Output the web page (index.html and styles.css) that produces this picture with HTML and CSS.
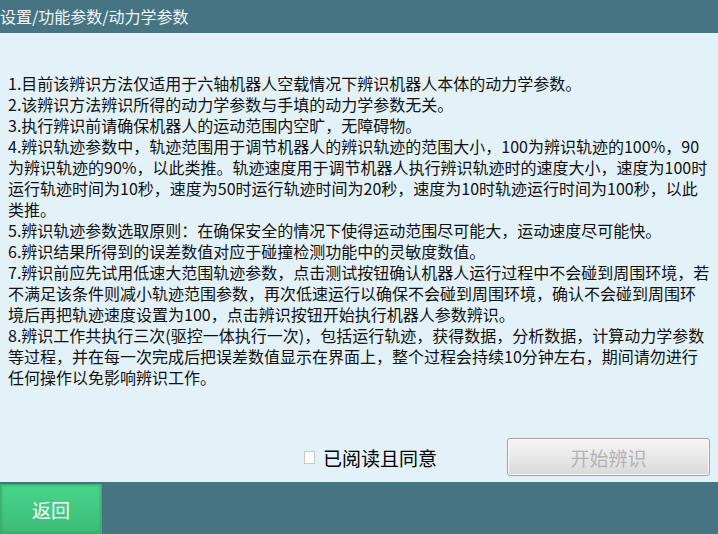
FILE: index.html
```html
<!DOCTYPE html>
<html>
<head>
    <meta charset="utf-8">
    <title>动力学参数</title>
    <link rel="stylesheet" href="styles.css">
</head>
<body>
    <div class="page">
        <div class="title-bar">设置/功能参数/动力学参数</div>

        <div class="main">
            <div class="notes">
                <p>1.目前该辨识方法仅适用于六轴机器人空载情况下辨识机器人本体的动力学参数。</p>
                <p>2.该辨识方法辨识所得的动力学参数与手填的动力学参数无关。</p>
                <p>3.执行辨识前请确保机器人的运动范围内空旷，无障碍物。</p>
                <p>4.辨识轨迹参数中，轨迹范围用于调节机器人的辨识轨迹的范围大小，100为辨识轨迹的100%，90<br>为辨识轨迹的90%，以此类推。轨迹速度用于调节机器人执行辨识轨迹时的速度大小，速度为100时<br>运行轨迹时间为10秒，速度为50时运行轨迹时间为20秒，速度为10时轨迹运行时间为100秒，以此<br>类推。</p>
                <p>5.辨识轨迹参数选取原则：在确保安全的情况下使得运动范围尽可能大，运动速度尽可能快。</p>
                <p>6.辨识结果所得到的误差数值对应于碰撞检测功能中的灵敏度数值。</p>
                <p>7.辨识前应先试用低速大范围轨迹参数，点击测试按钮确认机器人运行过程中不会碰到周围环境，若<br>不满足该条件则减小轨迹范围参数，再次低速运行以确保不会碰到周围环境，确认不会碰到周围环<br>境后再把轨迹速度设置为100，点击辨识按钮开始执行机器人参数辨识。</p>
                <p>8.辨识工作共执行三次(驱控一体执行一次)，包括运行轨迹，获得数据，分析数据，计算动力学参数<br>等过程，并在每一次完成后把误差数值显示在界面上，整个过程会持续10分钟左右，期间请勿进行<br>任何操作以免影响辨识工作。</p>
            </div>

            <div class="actions">
                <label class="agree">
                    <input type="checkbox" id="agree">
                    <span>已阅读且同意</span>
                </label>
                <button class="start-btn" id="start" disabled>开始辨识</button>
            </div>
        </div>

        <div class="bottom-bar">
            <button class="back-btn">返回</button>
        </div>
    </div>

    <script>
        // 勾选同意后才能开始辨识
        const agree = document.getElementById('agree');
        const start = document.getElementById('start');
        agree.addEventListener('change', function () {
            start.disabled = !agree.checked;
        });
    </script>
</body>
</html>
```

FILE: styles.css
```css
body {
    margin: 0;
    padding: 0;
    font-family: "Noto Sans CJK SC", "Noto Sans", sans-serif;
    background: #e3f2f8;
}

.page {
    height: 534px;
    display: flex;
    flex-direction: column;
}

.title-bar {
    height: 33px;
    line-height: 33px;
    background: #467482;
    color: #f2f6f7;
    font-size: 16px;
}

.main {
    flex: 1;
    display: flex;
    flex-direction: column;
    padding: 40px 8px 6px 8px;
}

.notes {
    width: 706px;
    color: #111;
    font-size: 16px;
    line-height: 21px;
    white-space: nowrap;
}

.notes p {
    margin: 0;
}

.actions {
    margin-top: auto;
    display: flex;
    justify-content: flex-end;
    align-items: center;
}

.agree {
    display: flex;
    align-items: center;
    font-size: 19px;
    color: #000;
    margin-right: 70px;
}

.agree input {
    appearance: none;
    width: 11px;
    height: 13px;
    margin: 0 8px 0 0;
    background: #fff;
    border: 1px solid #c8c8c8;
}

.agree input:checked {
    background: #467482;
}

.start-btn {
    width: 203px;
    height: 38px;
    border: 1px solid #a3a3a3;
    border-radius: 3px;
    background: linear-gradient(#f6f6f6, #d9d9d9);
    color: #b3b3b3;
    font-family: inherit;
    font-size: 19px;
    box-shadow: inset 0 0 0 1px #fafafa;
}

.bottom-bar {
    height: 52px;
    background: #467482;
    display: flex;
    align-items: flex-end;
}

.back-btn {
    width: 102px;
    height: 50px;
    border: 1px solid #39b06c;
    background: linear-gradient(#47d58c, #3cbb76);
    color: #fff;
    font-family: inherit;
    font-size: 19px;
    cursor: pointer;
    box-shadow: inset 0 0 3px rgba(0, 80, 40, 0.35);
}
```
